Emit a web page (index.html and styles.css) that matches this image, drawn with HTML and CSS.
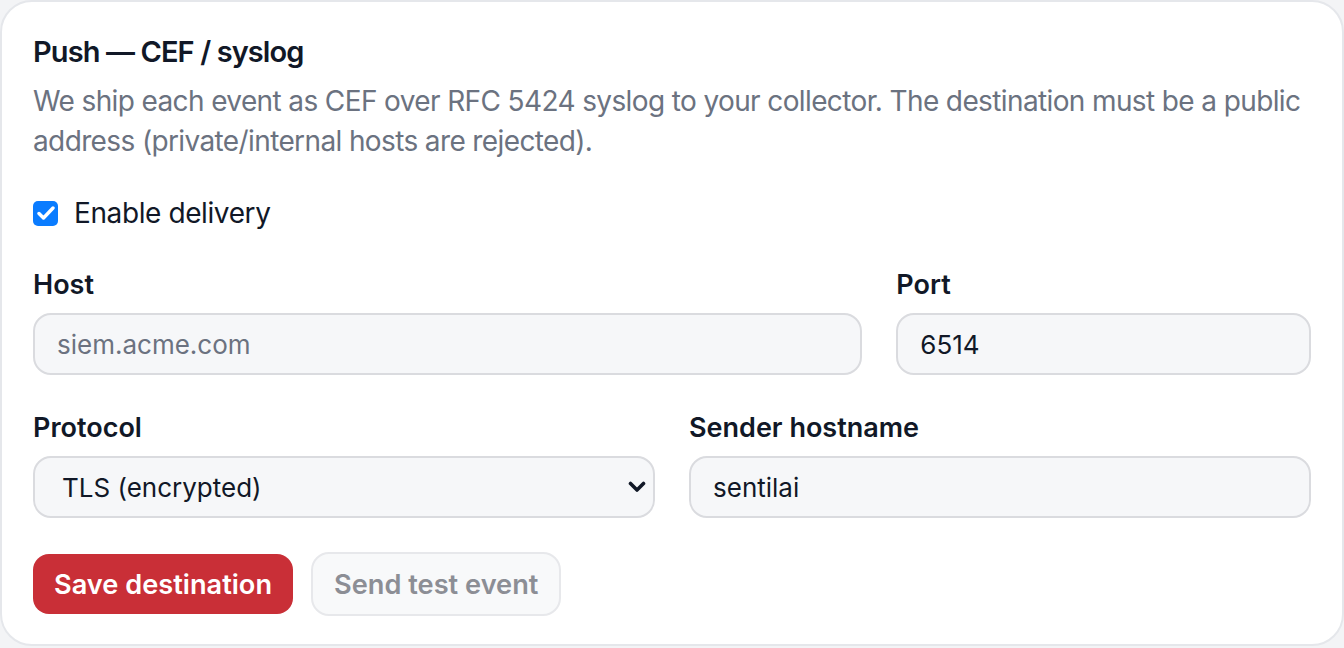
FILE: index.html
```html
<!DOCTYPE html>
<html>
<head>
  <meta charset="UTF-8">
  <title>Push — CEF / syslog</title>
  <link rel="stylesheet" href="styles.css">
</head>
<body>
  <div class="card">
    <h2 class="card-title">Push — CEF / syslog</h2>
    <p class="card-desc">
      We ship each event as CEF over RFC 5424 syslog to your collector. The destination must be a public
      address (private/internal hosts are rejected).
    </p>

    <label class="check-row">
      <span class="check-box">
        <svg width="18" height="14" viewBox="0 0 18 14"><path d="M2 7.5l4.5 4.5L16 2" fill="none" stroke="#fff" stroke-width="3.4" stroke-linecap="round" stroke-linejoin="round"/></svg>
      </span>
      Enable delivery
    </label>

    <div class="field-row row-host">
      <div class="field">
        <div class="field-label">Host</div>
        <input class="field-input" type="text" placeholder="siem.acme.com">
      </div>
      <div class="field">
        <div class="field-label">Port</div>
        <input class="field-input" type="text" value="6514">
      </div>
    </div>

    <div class="field-row row-proto">
      <div class="field">
        <div class="field-label">Protocol</div>
        <div class="select-wrap">
          <select class="field-input field-select">
            <option>TLS (encrypted)</option>
            <option>TCP</option>
            <option>UDP</option>
          </select>
          <svg class="select-arrow" width="18" height="12" viewBox="0 0 18 12"><path d="M2.5 2.5L9 9l6.5-6.5" fill="none" stroke="#111827" stroke-width="3.6" stroke-linecap="round" stroke-linejoin="round"/></svg>
        </div>
      </div>
      <div class="field">
        <div class="field-label">Sender hostname</div>
        <input class="field-input" type="text" value="sentilai">
      </div>
    </div>

    <div class="actions">
      <button class="btn btn-primary">Save destination</button>
      <button class="btn btn-secondary" disabled>Send test event</button>
    </div>
  </div>
</body>
</html>
```

FILE: styles.css
```css
body {
  margin: 0;
  background-color: #f3f4f6;
  font-family: Inter, "Liberation Sans", Arial, sans-serif;
  color: #111827;
}
.card {
  box-sizing: border-box;
  width: 1344px;
  height: 646px;
  background-color: #fff;
  border: 2px solid #e5e7eb;
  border-radius: 32px;
  padding: 30px 31px;
}
.card-title {
  margin: 0;
  font-size: 29px;
  line-height: 40px;
  font-weight: 600;
  letter-spacing: -0.9px;
}
.card-desc {
  margin: 9px 0 0;
  font-size: 28px;
  line-height: 40px;
  letter-spacing: -0.62px;
  color: #6b7280;
}
.check-row {
  display: flex;
  align-items: center;
  gap: 16px;
  margin-top: 32px;
  height: 40px;
  font-size: 28px;
  letter-spacing: -0.4px;
}
.check-box {
  width: 25px;
  height: 25px;
  border-radius: 5px;
  background-color: #0a7cff;
  display: flex;
  align-items: center;
  justify-content: center;
}
.field-row {
  display: grid;
  gap: 34px;
  margin-top: 34px;
}
.row-host {
  grid-template-columns: 2fr 1fr;
}
.row-proto {
  grid-template-columns: 1fr 1fr;
  margin-top: 35px;
}
.field-label {
  font-size: 27px;
  line-height: 36px;
  font-weight: 600;
  margin-bottom: 10px;
}
.field-input {
  box-sizing: border-box;
  width: 100%;
  height: 62px;
  border: 2px solid #dadbdf;
  border-radius: 18px;
  background-color: #f6f7f9;
  padding: 0 22px;
  font-family: inherit;
  font-size: 26px;
  color: #111827;
  outline: none;
}
.field-input::placeholder {
  color: #6b7280;
}
.select-wrap {
  position: relative;
}
.field-select {
  appearance: none;
  -webkit-appearance: none;
  padding-left: 27px;
}
.select-arrow {
  position: absolute;
  right: 9px;
  top: 25px;
  pointer-events: none;
}
.actions {
  display: flex;
  align-items: center;
  gap: 18px;
  margin-top: 34px;
}
.btn {
  font-family: inherit;
  font-size: 27.2px;
  font-weight: 600;
  border-radius: 16px;
  padding: 0 21px;
  cursor: pointer;
}
.btn-primary {
  height: 60px;
  background-color: #c92f37;
  color: #fff;
  border: none;
}
.btn-secondary {
  height: 64px;
  background-color: #f8f9fa;
  color: #8c8e95;
  border: 2px solid #e7e8eb;
  border-radius: 18px;
  cursor: not-allowed;
}
```
